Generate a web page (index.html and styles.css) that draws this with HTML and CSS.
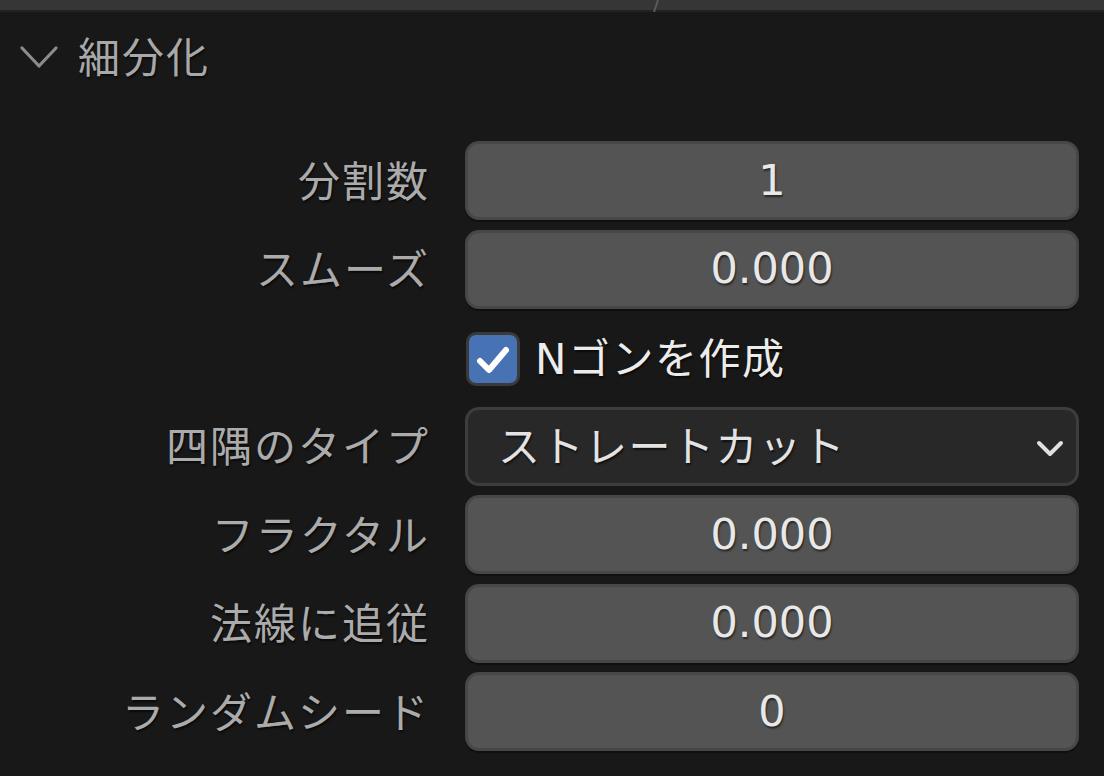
FILE: index.html
```html
<!DOCTYPE html>
<html lang="ja">
<head>
    <meta charset="UTF-8">
    <meta name="viewport" content="width=device-width, initial-scale=1.0">
    <title>細分化</title>
    <link rel="stylesheet" href="styles.css">
</head>
<body>
    <div class="topbar">
        <svg class="topbar-mark" width="20" height="12" viewBox="0 0 20 12">
            <path d="M12 0 L8 12" stroke="#5a5a5a" stroke-width="2" fill="none"/>
        </svg>
    </div>
    <div class="panel">
        <div class="panel-header">
            <svg class="caret" width="40" height="26" viewBox="0 0 40 26">
                <polyline points="3,4 20,22 37,4" fill="none" stroke="#8c8c8c" stroke-width="3.2" stroke-linecap="round" stroke-linejoin="round"/>
            </svg>
            <span class="panel-title">細分化</span>
        </div>

        <div class="props">
            <label class="prop-label">分割数</label>
            <div class="num-field">1</div>

            <label class="prop-label">スムーズ</label>
            <div class="num-field">0.000</div>

            <span></span>
            <div class="check-row">
                <span class="checkbox">
                    <svg width="40" height="40" viewBox="0 0 40 40">
                        <polyline points="7,22 16,31 33,11" fill="none" stroke="#ffffff" stroke-width="6" stroke-linecap="round" stroke-linejoin="round"/>
                    </svg>
                </span>
                <span class="check-text">Nゴンを作成</span>
            </div>

            <label class="prop-label">四隅のタイプ</label>
            <div class="menu-field">
                <span class="menu-text">ストレートカット</span>
                <svg class="menu-arrow" width="30" height="20" viewBox="0 0 30 20">
                    <polyline points="3,4 14,15 25,4" fill="none" stroke="#e0e0e0" stroke-width="4" stroke-linecap="round" stroke-linejoin="round"/>
                </svg>
            </div>

            <label class="prop-label">フラクタル</label>
            <div class="num-field">0.000</div>

            <label class="prop-label">法線に追従</label>
            <div class="num-field">0.000</div>

            <label class="prop-label">ランダムシード</label>
            <div class="num-field">0</div>
        </div>
    </div>
</body>
</html>
```

FILE: styles.css
```css
* {
    margin: 0;
    padding: 0;
    box-sizing: border-box;
}

body {
    background: #181818;
    font-family: 'DejaVu Sans', 'Noto Sans CJK JP', sans-serif;
    width: 1104px;
    height: 776px;
    overflow: hidden;
}

.topbar {
    height: 12px;
    background: #363636;
    border-bottom: 2px solid #222222;
    padding-left: 646px;
}

.topbar-mark {
    display: block;
}

.panel {
    padding: 0 25px 0 0;
}

.panel-header {
    display: flex;
    align-items: center;
    height: 90px;
    padding-left: 19px;
    padding-bottom: 2px;
}

.caret {
    display: block;
    margin-right: 19px;
    margin-top: 2px;
}

.panel-title {
    color: #a8a8a8;
    font-size: 42px;
    letter-spacing: 2px;
    text-shadow: 1px 2px 2px rgba(0, 0, 0, 0.6);
    padding-bottom: 4px;
}

.props {
    display: grid;
    grid-template-columns: 430px 1fr;
    column-gap: 35px;
    row-gap: 9.5px;
    margin-top: 39px;
    grid-auto-rows: 79px;
}

.prop-label {
    color: #ababab;
    font-size: 42px;
    letter-spacing: 2px;
    text-align: right;
    align-self: center;
    padding-bottom: 5px;
    text-shadow: 1px 2px 2px rgba(0, 0, 0, 0.6);
    white-space: nowrap;
}

.num-field {
    background: #545454;
    border: 3px solid #474747;
    border-radius: 14px;
    color: #e8e8e8;
    font-size: 43px;
    display: flex;
    align-items: center;
    justify-content: center;
    padding-bottom: 2px;
    text-shadow: 1px 2px 2px rgba(0, 0, 0, 0.55);
    box-shadow: 0 2px 1px rgba(0, 0, 0, 0.35);
}

.check-row {
    display: flex;
    align-items: center;
    gap: 15px;
}

.checkbox {
    width: 54px;
    height: 54px;
    background: #4772b3;
    border: 3px solid #3a3a3a;
    border-radius: 10px;
    display: flex;
    align-items: center;
    justify-content: center;
    margin-left: 1px;
    margin-top: 3px;
}

.checkbox svg {
    display: block;
}

.check-text {
    color: #ececec;
    font-size: 42px;
    letter-spacing: 1.5px;
    text-shadow: 1px 2px 2px rgba(0, 0, 0, 0.6);
    padding-bottom: 4px;
}

.menu-field {
    background: #282828;
    border: 3px solid #3d3d3d;
    border-radius: 14px;
    color: #e3e3e3;
    font-size: 42px;
    letter-spacing: 1.5px;
    display: flex;
    align-items: center;
    justify-content: space-between;
    padding: 0 10px 0 30px;
    text-shadow: 1px 2px 2px rgba(0, 0, 0, 0.6);
}

.menu-text {
    padding-bottom: 5px;
}

.menu-arrow {
    display: block;
    margin-top: 6px;
}
```
